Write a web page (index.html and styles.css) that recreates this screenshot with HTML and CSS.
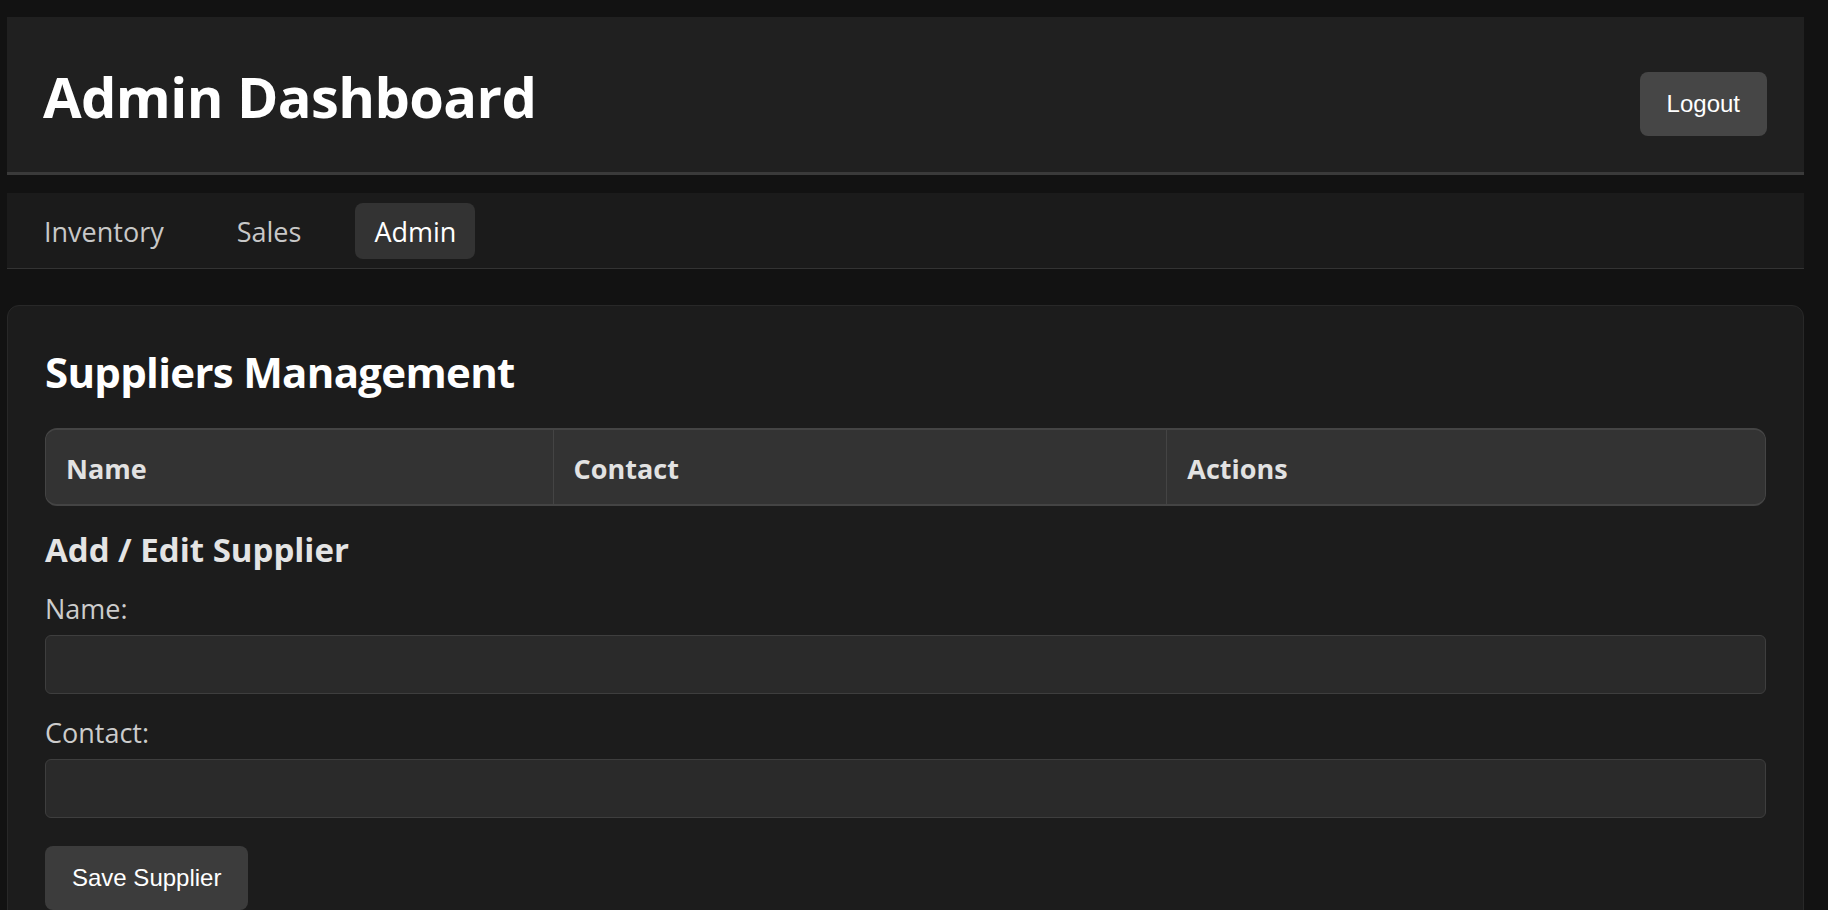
FILE: index.html
```html
<!DOCTYPE html>
<html lang="en">
<head>
<meta charset="utf-8">
<title>Admin Dashboard</title>
<link rel="stylesheet" href="styles.css">
</head>
<body>
<div class="app">
  <header class="topbar">
    <h1 class="title">Admin Dashboard</h1>
    <button class="btn btn-logout" type="button">Logout</button>
  </header>

  <nav class="tabs">
    <a class="tab" href="#">Inventory</a>
    <a class="tab" href="#">Sales</a>
    <a class="tab tab-active" href="#">Admin</a>
  </nav>

  <main class="card">
    <h2 class="card-title">Suppliers Management</h2>

    <div class="table-wrap">
      <table class="table">
        <colgroup>
          <col class="col-name">
          <col class="col-contact">
          <col class="col-actions">
        </colgroup>
        <thead>
          <tr>
            <th>Name</th>
            <th>Contact</th>
            <th>Actions</th>
          </tr>
        </thead>
        <tbody></tbody>
      </table>
    </div>

    <h3 class="form-title">Add / Edit Supplier</h3>
    <form class="form">
      <label class="label" for="sup-name">Name:</label>
      <input class="input" id="sup-name" type="text">
      <label class="label label-next" for="sup-contact">Contact:</label>
      <input class="input" id="sup-contact" type="text">
      <button class="btn btn-save" type="button">Save Supplier</button>
    </form>
  </main>
</div>
</body>
</html>
```
FILE: styles.css
```css
html, body {
  margin: 0;
  padding: 0;
  background: #121212;
}

body {
  font-family: "Open Sans", "Noto Sans", sans-serif;
  color: #e0e0e0;
}

.app {
  padding: 17px 24px 0 7px;
}

/* ---------- header ---------- */
.topbar {
  display: flex;
  justify-content: space-between;
  align-items: flex-start;
  background: #202020;
  border-bottom: 3px solid #3a3a3a;
  padding: 51px 37px 36px 36px;
}

.title {
  margin: 0;
  font-size: 56px;
  line-height: 56px;
  font-weight: 700;
  letter-spacing: -0.6px;
  color: #ffffff;
}

.btn {
  font-family: "Liberation Sans", Arial, sans-serif;
  font-size: 24px;
  line-height: 28px;
  padding: 18px 27px;
  color: #ffffff;
  border: none;
  border-radius: 8px;
  cursor: pointer;
}

.btn-logout {
  margin-top: 4px;
  background: #464646;
}

/* ---------- tabs ---------- */
.tabs {
  display: flex;
  gap: 35px;
  margin-top: 18px;
  background: #1b1b1b;
  border-bottom: 1px solid #333333;
  padding: 10px 18px 9px;
}

.tab {
  font-size: 27px;
  line-height: 38px;
  padding: 10px 19px 8px;
  color: #c8c8c8;
  text-decoration: none;
  border-radius: 8px;
}

.tab-active {
  background: #333333;
  color: #ffffff;
}

/* ---------- card ---------- */
.card {
  display: block;
  margin-top: 36px;
  background: #1c1c1c;
  border: 1px solid #282828;
  border-radius: 12px;
  padding: 0 37px 37px;
}

.card-title {
  margin: 45px 0 0;
  font-size: 42px;
  line-height: 42px;
  font-weight: 700;
  letter-spacing: -0.7px;
  color: #ffffff;
}

.table-wrap {
  margin-top: 35px;
  border: 1px solid #444444;
  border-top-width: 2px;
  border-bottom-width: 2px;
  border-radius: 12px;
  overflow: hidden;
  background: #333333;
}

.table {
  width: 100%;
  table-layout: fixed;
  border-collapse: collapse;
}

.col-name { width: 29.5%; }
.col-contact { width: 35.7%; }
.col-actions { width: 34.8%; }

.table th {
  text-align: left;
  font-size: 27px;
  line-height: 36px;
  font-weight: 700;
  color: #e2e2e2;
  padding: 21px 20px 17px;
  background: #333333;
}

.table th + th {
  border-left: 1px solid #444444;
}

.form-title {
  margin: 27px 0 0;
  font-size: 33px;
  line-height: 33px;
  font-weight: 700;
  color: #e4e4e4;
}

.form {
  display: flex;
  flex-direction: column;
  align-items: flex-start;
}

.label {
  display: block;
  margin-top: 29px;
  font-size: 27px;
  line-height: 27px;
  color: #cccccc;
}

.label-next {
  margin-top: 25px;
}

.input {
  box-sizing: border-box;
  width: 100%;
  height: 59px;
  margin-top: 13px;
  background: #2a2a2a;
  border: 1px solid #3e3e3e;
  border-radius: 6px;
  color: #ffffff;
  font-family: "Open Sans", sans-serif;
  font-size: 24px;
  padding: 0 16px;
  outline: none;
}

.btn-save {
  margin-top: 28px;
  background: #3c3c3c;
}
```
